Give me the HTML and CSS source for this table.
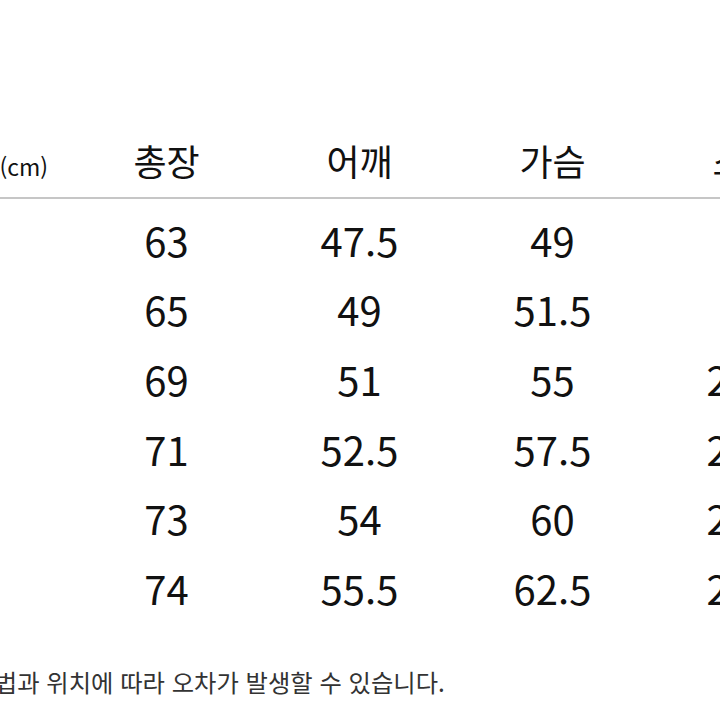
FILE: index.html
```html
<!DOCTYPE html>
<html lang="ko">
<head>
<meta charset="utf-8">
<link rel="stylesheet" href="styles.css">
</head>
<body>
<div class="sheet">
  <div class="grid head">
    <div class="cell unit">사이즈(cm)</div>
    <div class="cell">총장</div>
    <div class="cell">어깨</div>
    <div class="cell">가슴</div>
    <div class="cell">소매</div>
  </div>
  <div class="body">
    <div class="grid row"><div class="cell size">S</div><div class="cell">63</div><div class="cell">47.5</div><div class="cell">49</div><div class="cell">19</div></div>
    <div class="grid row"><div class="cell size">M</div><div class="cell">65</div><div class="cell">49</div><div class="cell">51.5</div><div class="cell">20</div></div>
    <div class="grid row"><div class="cell size">L</div><div class="cell">69</div><div class="cell">51</div><div class="cell">55</div><div class="cell">20.5</div></div>
    <div class="grid row"><div class="cell size">XL</div><div class="cell">71</div><div class="cell">52.5</div><div class="cell">57.5</div><div class="cell">21.5</div></div>
    <div class="grid row"><div class="cell size">2XL</div><div class="cell">73</div><div class="cell">54</div><div class="cell">60</div><div class="cell">22.5</div></div>
    <div class="grid row"><div class="cell size">3XL</div><div class="cell">74</div><div class="cell">55.5</div><div class="cell">62.5</div><div class="cell">23.5</div></div>
  </div>
  <p class="note">측정 방법과 위치에 따라 오차가 발생할 수 있습니다.</p>
</div>
</body>
</html>
```

FILE: styles.css
```css
html, body {
  margin: 0;
  padding: 0;
  background: #ffffff;
  overflow: hidden;
  width: 720px;
  height: 720px;
}
.sheet {
  margin-left: -230px;
  width: 1100px;
  padding-top: 123px;
  font-family: "Noto Sans CJK KR", "Noto Sans", sans-serif;
  color: #111111;
}
.grid {
  display: grid;
  grid-template-columns: 300px 193px 193px 193px 193px;
  align-items: center;
}
.head {
  height: 74px;
  border-bottom: 2px solid #c6c6c6;
  font-size: 36px;
  line-height: 40px;
}
.cell {
  text-align: center;
  white-space: nowrap;
}
.head .unit {
  text-align: right;
  padding-right: 22px;
  font-size: 23px;
  line-height: 30px;
  padding-top: 11px;
}
.body {
  padding-top: 6px;
}
.row {
  height: 69.6px;
  font-size: 40px;
  line-height: 44px;
}
.row .size {
  text-align: left;
  padding-left: 20px;
}
.note {
  margin: 44px 0 0 0;
  padding-left: 151px;
  font-size: 24.3px;
  line-height: 30px;
  color: #333333;
}
```
